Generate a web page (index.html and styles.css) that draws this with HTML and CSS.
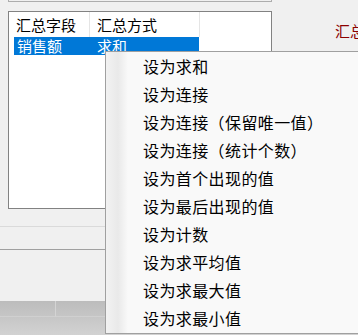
FILE: index.html
```html
<!DOCTYPE html>
<html lang="zh-CN">
<head>
    <meta charset="UTF-8">
    <title>汇总设置</title>
    <link rel="stylesheet" href="styles.css">
</head>
<body>
    <div class="panel">
        <div class="top-box"></div>
        <div class="row">
            <div class="list">
                <div class="list-head">
                    <div class="col col-field">汇总字段</div>
                    <div class="col col-mode">汇总方式</div>
                </div>
                <div class="list-row selected">
                    <div class="cell cell-field">销售额</div>
                    <div class="cell cell-mode">求和</div>
                </div>
            </div>
            <div class="side-label">汇总</div>
        </div>
        <div class="sep-light"></div>
        <div class="sep-dark"></div>
        <div class="grid">
            <div class="grid-cell"></div>
            <div class="grid-cell"></div>
        </div>
    </div>

    <ul class="menu">
        <li>设为求和</li>
        <li>设为连接</li>
        <li>设为连接（保留唯一值）</li>
        <li>设为连接（统计个数）</li>
        <li>设为首个出现的值</li>
        <li>设为最后出现的值</li>
        <li>设为计数</li>
        <li>设为求平均值</li>
        <li>设为求最大值</li>
        <li>设为求最小值</li>
    </ul>
</body>
</html>
```

FILE: styles.css
```css
body {
    margin: 0;
    width: 358px;
    height: 335px;
    overflow: hidden;
    position: relative;
    background: #f0f0f0;
    font-family: "Noto Sans CJK SC", "Noto Sans", sans-serif;
    color: #000;
}

.top-box {
    margin-left: 8px;
    width: 262px;
    height: 1px;
    border: 1px solid #adadad;
    border-top: none;
}

.row {
    display: flex;
    align-items: flex-start;
}

.list {
    flex: none;
    margin: 9px 0 0 8px;
    width: 262px;
    height: 196px;
    border: 1px solid #828282;
    background: #fff;
    font-size: 15px;
}

.list-head {
    display: flex;
    height: 25px;
}

.col {
    padding-left: 7px;
    line-height: 25px;
    border-right: 1px solid #e5e5e5;
    box-sizing: border-box;
}

.col-field {
    width: 81px;
}

.col-mode {
    width: 110px;
}

.list-row {
    display: flex;
    margin-left: 5px;
    width: 185px;
    height: 18px;
    line-height: 18px;
}

.list-row.selected {
    background: #0078d7;
    color: #fff;
}

.cell-field {
    width: 76px;
    padding-left: 3px;
    box-sizing: border-box;
}

.cell-mode {
    padding-left: 7px;
}

.side-label {
    flex: 1;
    min-width: 0;
    overflow: hidden;
    margin: 19px 0 0 63px;
    font-size: 15px;
    line-height: 20px;
    color: #8b0000;
    white-space: nowrap;
}

.sep-light {
    margin-top: 17px;
    height: 1px;
    background: #dadada;
}

.sep-dark {
    margin-top: 22px;
    height: 1px;
    background: #a0a0a0;
}

.grid {
    margin-top: 51px;
    height: 34px;
    display: flex;
    background: linear-gradient(#bcbcbc, #d2d2d2);
}

.grid-cell {
    width: 55px;
    border-right: 1px solid #d4d4d4;
    border-bottom: 1px solid #d0d0d0;
    height: 15px;
}

.grid-cell + .grid-cell {
    flex: 1;
    border-right: none;
}

.menu {
    position: absolute;
    left: 105px;
    top: 51px;
    width: 252px;
    height: 281px;
    margin: 0;
    padding: 0;
    list-style: none;
    box-sizing: content-box;
    border: 1px solid #a0a0a0;
    border-right: none;
    background: linear-gradient(to right, #f2f2f2, #e9e9e9 12px, #f9f9f9 22px, #f9f9f9);
    font-size: 16px;
    letter-spacing: 0.4px;
    overflow: hidden;
}

.menu li {
    height: 28px;
    line-height: 28px;
    padding-left: 37px;
    white-space: nowrap;
}
```
